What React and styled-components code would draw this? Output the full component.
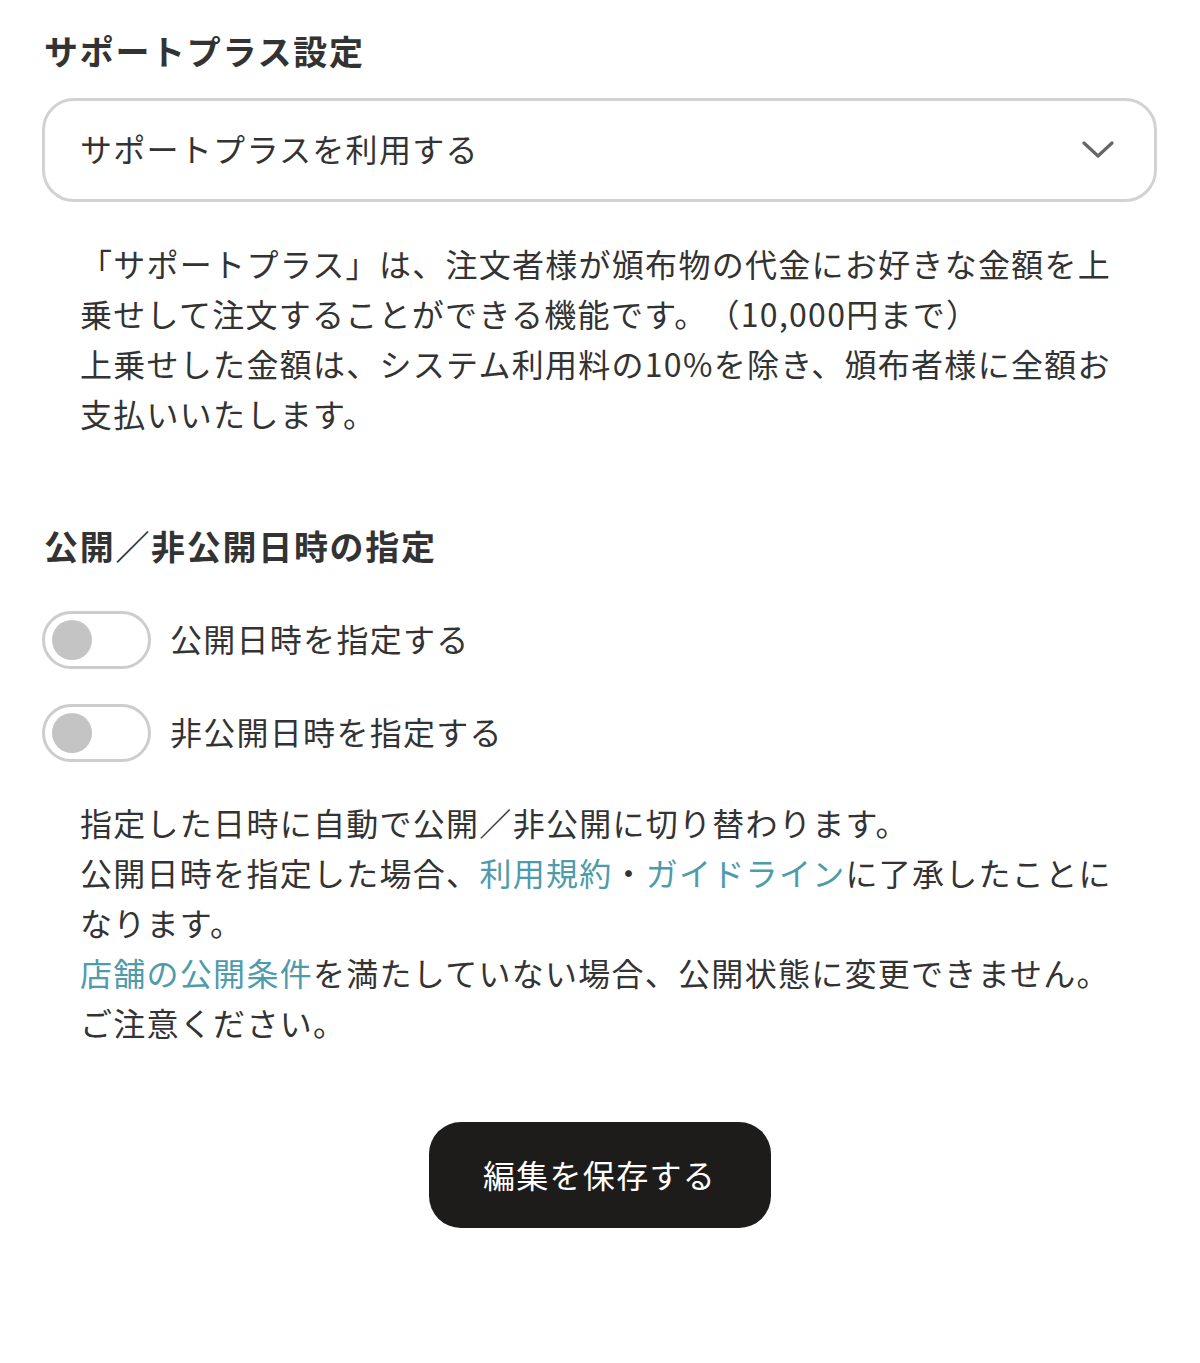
import React, { useState } from "react";
import styled, { createGlobalStyle } from "styled-components";

const Global = createGlobalStyle`
  html, body { margin: 0; padding: 0; background: #fff; }
  body {
    font-family: "Noto Sans CJK JP", "Noto Sans", sans-serif;
    color: #333;
    -webkit-font-smoothing: antialiased;
    text-spacing-trim: space-all;
  }
  * { box-sizing: border-box; }
`;

const Page = styled.div`
  width: 1200px;
  min-height: 1363px;
  padding: 25px 43px 0 42px;
  display: flex;
  flex-direction: column;
`;

const Heading = styled.h2`
  margin: ${(p) => p.$mt || 0}px 0 0 2px;
  font-size: 34px;
  line-height: 51px;
  font-weight: 700;
  letter-spacing: 0.05em;
  color: #333;
`;

const SelectBox = styled.div`
  margin-top: 22px;
  height: 104px;
  border: 3px solid #d2d2d2;
  border-radius: 32px;
  display: flex;
  align-items: center;
  justify-content: space-between;
  padding: 0 40px 4px 35px;
  font-size: 32px;
  letter-spacing: 0.04em;
  color: #333;
`;

const ChevronWrap = styled.span`
  display: flex;
  margin-top: 4px;
`;

const Chevron = () => (
  <ChevronWrap>
    <svg width="32" height="20" viewBox="0 0 32 20" fill="none">
      <path d="M2 3 L16 16 L30 3" stroke="#666" strokeWidth="3.2" strokeLinecap="round" strokeLinejoin="round" />
    </svg>
  </ChevronWrap>
);

const Note = styled.p`
  margin: ${(p) => p.$mt || 0}px 0 0 0;
  padding: 0 38px;
  font-size: 32px;
  line-height: 50px;
  letter-spacing: 0.04em;
  color: #333;
  font-weight: 400;
`;

const Link = styled.a`
  color: #4e9bab;
  text-decoration: none;
`;

const ToggleRow = styled.label`
  margin-top: ${(p) => p.$mt}px;
  display: flex;
  align-items: center;
  gap: 19px;
  cursor: pointer;
`;

const Track = styled.span`
  width: 109px;
  height: 58px;
  border: 3px solid #cdcdcd;
  border-radius: 29px;
  padding: 0 7px;
  display: flex;
  align-items: center;
  justify-content: ${(p) => (p.$on ? "flex-end" : "flex-start")};
  background: ${(p) => (p.$on ? "#333" : "#fff")};
  flex-shrink: 0;
`;

const Knob = styled.span`
  width: 40px;
  height: 40px;
  border-radius: 50%;
  background: #c4c4c4;
`;

const ToggleLabel = styled.span`
  font-size: 32px;
  letter-spacing: 0.04em;
  color: #333;
  margin-top: -4px;
`;

const SaveButton = styled.button`
  margin: 75px auto 0;
  width: 342px;
  height: 106px;
  border: none;
  border-radius: 32px;
  background: #1d1c1b;
  color: #fff;
  font-family: "Noto Sans CJK JP", "Noto Sans", sans-serif;
  font-size: 32px;
  letter-spacing: 0.04em;
  padding-bottom: 4px;
  cursor: pointer;
`;

const Toggle = ({ label, mt }) => {
  const [on, setOn] = useState(false);
  return (
    <ToggleRow $mt={mt} onClick={() => setOn(!on)}>
      <Track $on={on}>
        <Knob />
      </Track>
      <ToggleLabel>{label}</ToggleLabel>
    </ToggleRow>
  );
};

export default function App() {
  return (
    <>
      <Global />
      <Page>
        <Heading>サポートプラス設定</Heading>
        <SelectBox>
          <span>サポートプラスを利用する</span>
          <Chevron />
        </SelectBox>
        <Note $mt={36}>
          「サポートプラス」は、注文者様が頒布物の代金にお好きな金額を上乗せして注文することができる機能です。（10,000円まで）
          <br />
          上乗せした金額は、システム利用料の10%を除き、頒布者様に全額お支払いいたします。
        </Note>
        <Heading $mt={82}>公開／非公開日時の指定</Heading>
        <Toggle mt={40} label="公開日時を指定する" />
        <Toggle mt={35} label="非公開日時を指定する" />
        <Note $mt={35}>
          指定した日時に自動で公開／非公開に切り替わります。
          <br />
          公開日時を指定した場合、<Link href="#">利用規約</Link>・<Link href="#">ガイドライン</Link>に了承したことになります。
          <br />
          <Link href="#">店舗の公開条件</Link>を満たしていない場合、公開状態に変更できません。ご注意ください。
        </Note>
        <SaveButton>編集を保存する</SaveButton>
      </Page>
    </>
  );
}
